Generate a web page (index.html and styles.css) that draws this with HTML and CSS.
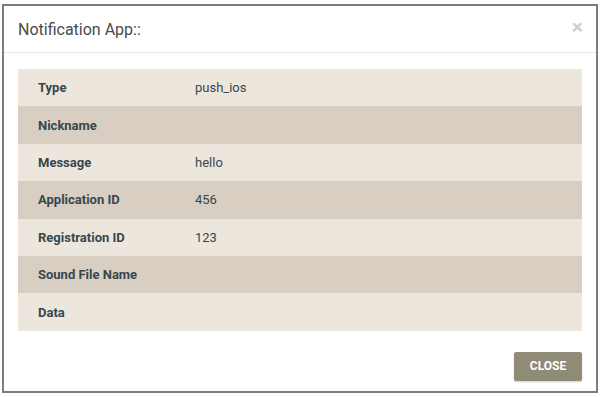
FILE: index.html
```html
<!DOCTYPE html>
<html lang="en">
<head>
  <meta charset="UTF-8">
  <meta name="viewport" content="width=device-width, initial-scale=1.0">
  <title>Notification App</title>
  <link rel="stylesheet" href="styles.css">
</head>
<body>
  <div class="modal">
    <div class="modal-header">
      <h4 class="modal-title">Notification App::</h4>
      <span class="close">&times;</span>
    </div>

    <div class="modal-body">
      <table class="details">
        <tr><td class="label">Type</td><td>push_ios</td></tr>
        <tr><td class="label">Nickname</td><td></td></tr>
        <tr><td class="label">Message</td><td>hello</td></tr>
        <tr><td class="label">Application ID</td><td>456</td></tr>
        <tr><td class="label">Registration ID</td><td>123</td></tr>
        <tr><td class="label">Sound File Name</td><td></td></tr>
        <tr><td class="label">Data</td><td></td></tr>
      </table>
    </div>

    <div class="modal-footer">
      <button class="btn">Close</button>
    </div>
  </div>
</body>
</html>
```

FILE: styles.css
```css
body {
  font-family: Roboto, "Liberation Sans", sans-serif;
  margin: 0;
  padding: 4px 5px 4px 2px;
  background: #fff;
  color: #37474f;
}
.modal {
  width: 596px;
  height: 389px;
  box-sizing: border-box;
  border: 2px solid #7d7d7d;
  background: #fff;
  display: flex;
  flex-direction: column;
}
.modal-header {
  height: 47px;
  box-sizing: border-box;
  border-bottom: 1px solid #e8e8e8;
  padding: 0 14px;
  display: flex;
  align-items: center;
  justify-content: space-between;
}
.modal-title {
  margin: 0;
  font-size: 16px;
  font-weight: 400;
  color: #4a4a4a;
}
.close {
  font-size: 21px;
  font-weight: 700;
  color: #cfcfcf;
  line-height: 1;
  margin-top: -4px;
  margin-right: -1px;
}
.modal-body {
  padding: 16px 14px 0;
}
.details {
  width: 100%;
  border-collapse: collapse;
  font-size: 13px;
}
.details td {
  height: 37.4px;
  padding: 0;
  vertical-align: middle;
}
.details tr:nth-child(odd) {
  background: #ede6dd;
}
.details tr:nth-child(even) {
  background: #d8cfc2;
}
.details .label {
  width: 157px;
  padding-left: 20px;
  font-weight: 700;
}
.modal-footer {
  display: flex;
  justify-content: flex-end;
  padding: 21px 14px 0;
}
.btn {
  width: 68px;
  height: 29px;
  border: none;
  border-radius: 2px;
  background: #8f8b77;
  color: #fff;
  font-family: Roboto, "Liberation Sans", sans-serif;
  font-size: 12px;
  font-weight: 700;
  text-transform: uppercase;
  box-shadow: 0 1px 2px rgba(0, 0, 0, 0.2);
  cursor: pointer;
}
```
